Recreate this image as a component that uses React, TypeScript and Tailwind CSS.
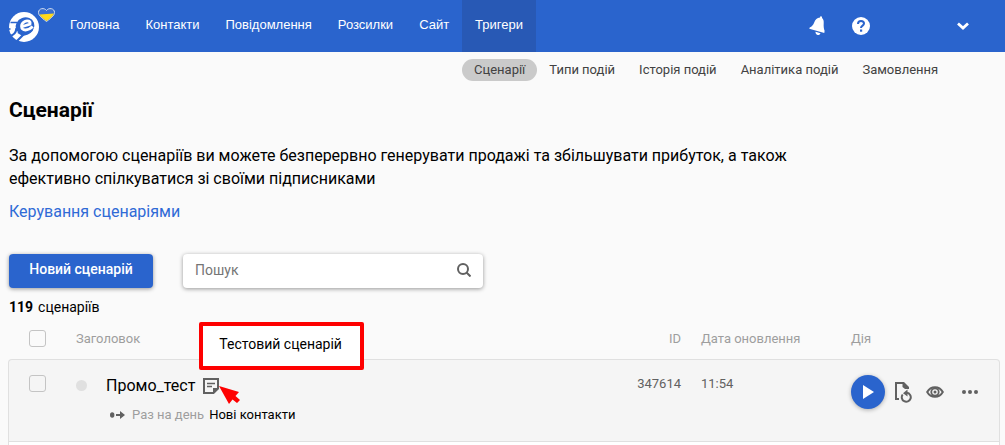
import React, { useState } from 'react';

const menuItems = ['Головна', 'Контакти', 'Повідомлення', 'Розсилки', 'Сайт', 'Тригери'];
const subMenuItems = ['Сценарії', 'Типи подій', 'Історія подій', 'Аналітика подій', 'Замовлення'];

const Logo: React.FC = () => (
    <svg width="48" height="38" viewBox="0 0 48 38" aria-hidden="true">
        <circle cx="16" cy="23" r="15" fill="#fff" />
        <ellipse cx="17" cy="22" rx="9.500" ry="8.500" transform="rotate(-20 17 22)" fill="#2a64cd" />
        <path d="M14.500 22.500 22 20.200c.8-3.200-2.600-4-5.200-2.800-4.600 2.200-4.300 8.600.7 8.600 2.800 0 5-1.300 7.200-3.400" fill="none" stroke="#fff" strokeWidth="2.800" />
        <g fill="none" stroke="#2a64cd">
            <path d="M2.500 18.500H9M0 25h2.500" strokeWidth="1.600" />
            <path d="M8.500 24c-.5 5-3.500 7.500-7 8M10 28l5 3-7 7" strokeWidth="2.200" />
            <path d="M13.500 31c4 0 8-1.500 11-5" strokeWidth="1.500" />
        </g>
        <path d="M38.500 17.500c-6-4.500-8-6.500-8-9 0-4.500 6-5 8-2 2-3 8-2.500 8 2 0 2.500-2 4.500-8 9z" fill="#3a6fd0" stroke="#d5dff0" />
        <path d="M31.500 10.500 46 9.500c-1.500 3-3.500 5-7.500 7.500-3.500-2.500-5.500-4-7-6.500z" fill="#ffd91a" />
    </svg>
);

const BellIcon: React.FC = () => (
    <svg width="16" height="20" viewBox="0 0 16 20" fill="#fff" aria-hidden="true">
        <path d="M12 .3c.9.1 1.200.8 1 1.700 1.500 1.200 1.900 3 1.700 5.200-.2 3 .1 5.500.9 7.600l-.3 2.300L.3 12.700l.4-1.200c2.300-.9 3.500-2.700 4.500-5.100C6.300 3.700 8 2.100 11 1.600c.1-.8.4-1.300 1-1.300z" />
        <path d="m6.500 15.800 5 1.400c-.5 1.400-1.500 2-2.900 1.700-1.500-.4-2.200-1.500-2.100-3.100z" />
    </svg>
);

const HelpIcon: React.FC = () => (
    <svg width="18" height="18" viewBox="0 0 18 18" aria-hidden="true">
        <circle cx="9" cy="9" r="9" fill="#fff" />
        <path d="M6 7c0-2 1.200-3 3-3s3 1 3 2.600c0 2-3 2-3 4.400" fill="none" stroke="#2a64cd" strokeWidth="2" />
        <path d="M8 12.500h2.200v2.200H8z" fill="#2a64cd" />
    </svg>
);

const NoteIcon: React.FC = () => (
    <svg width="16" height="16" viewBox="0 0 16 16" aria-hidden="true">
        <path d="M1 1h14v9.500L10.500 15H1z" fill="none" stroke="#616161" strokeWidth="2" />
        <path d="M10 15v-5h5z" fill="#616161" />
        <path d="M4 5.500h8M4 8.500h5" stroke="#616161" strokeWidth="1.500" />
    </svg>
);

const RestoreIcon: React.FC = () => (
    <svg width="18" height="22" viewBox="0 0 18 22" aria-hidden="true">
        <path d="M5 18H2V2h7.500" fill="none" stroke="#616161" strokeWidth="2" />
        <path d="M8.500 1H10l5 5v2h-4L8.500 6z" fill="#616161" />
        <path d="M8.700 13.500a4.500 4.500 0 1 0 4.300-1.700" fill="none" stroke="#616161" strokeWidth="2" />
        <path d="m9 12.200 4.500-3.700v7z" fill="#616161" />
    </svg>
);

const EyeIcon: React.FC = () => (
    <svg width="18" height="12" viewBox="0 0 18 12" aria-hidden="true">
        <path d="M1.200 6C3 2.800 5.500 1.200 9 1.200S15 2.800 16.800 6C15 9.200 12.500 10.800 9 10.800S3 9.200 1.200 6z" fill="none" stroke="#616161" strokeWidth="2" />
        <circle cx="9" cy="6" r="4.600" fill="#616161" />
        <circle cx="9" cy="6" r="2.800" fill="#f5f5f5" />
        <circle cx="9" cy="6" r="1.500" fill="#616161" />
    </svg>
);

const Checkbox: React.FC<{ label: string }> = ({ label }) => (
    <input
        type="checkbox"
        aria-label={label}
        className="block h-[17px] w-[17px] appearance-none rounded-[3px] border border-[#c4c4c4] bg-transparent checked:bg-[#2a64cd]"
    />
);

const App: React.FC = () => {
    const [search, setSearch] = useState('');

    return (
        <div className="flex min-h-screen flex-col bg-[#fafafa] font-['Roboto',sans-serif] text-black">
            <header className="flex h-[52px] items-stretch bg-[#2a64cd] text-white">
                <a href="#" aria-label="eSputnik" className="w-[57px] pt-1 pl-2">
                    <Logo />
                </a>
                <nav className="flex flex-1 font-['Liberation_Sans',sans-serif]">
                    {menuItems.map((item) => (
                        <a
                            key={item}
                            href="#"
                            className={`flex items-center px-[13px] pb-0.5 text-[13px] ${item === 'Тригери' ? 'bg-[#2859b5]' : ''}`}
                        >
                            {item}
                        </a>
                    ))}
                </nav>
                <div className="flex items-center pr-9">
                    <button aria-label="Сповіщення" className="mr-[27px]">
                        <BellIcon />
                    </button>
                    <button aria-label="Допомога" className="mr-[87px]">
                        <HelpIcon />
                    </button>
                    <button aria-label="Профіль">
                        <svg width="12" height="8" viewBox="0 0 12 8" fill="none" stroke="#fff" strokeWidth="2.800" aria-hidden="true">
                            <path d="m1 1.500 5 4.500 5-4.500" />
                        </svg>
                    </button>
                </div>
            </header>

            <nav className="flex pt-[7px] pl-[462px]">
                {subMenuItems.map((item) => (
                    <a
                        key={item}
                        href="#"
                        className={`rounded-full px-3 text-[13px] leading-[22px] whitespace-nowrap text-[#424242] ${item === 'Сценарії' ? 'bg-[#cacaca]' : ''}`}
                    >
                        {item}
                    </a>
                ))}
            </nav>

            <main className="flex flex-1 flex-col pt-[15px] pr-[5px] pl-2">
                <div className="flex flex-col pl-px">
                    <h1 className="text-[21px] leading-7 font-bold">Сценарії</h1>
                    <p className="mt-5 max-w-[800px] text-base leading-[23px]">
                        За допомогою сценаріїв ви можете безперервно генерувати продажі та збільшувати прибуток, а також
                        ефективно спілкуватися зі своїми підписниками
                    </p>
                    <a href="#" className="mt-[10px] self-start text-base leading-6 text-[#2f6ad6]">
                        Керування сценаріями
                    </a>

                    <div className="mt-[30px] flex">
                        <button className="h-[34px] w-[144px] rounded-sm bg-[#2a64cd] pb-1 text-sm font-medium text-white shadow-[0_1px_4px_rgba(0,0,0,0.4)]">
                            Новий сценарій
                        </button>
                        <div className="ml-[30px] flex h-[34px] w-[300px] items-center rounded-sm bg-white px-3 pb-0.5 shadow-[0_1px_4px_rgba(0,0,0,0.4)]">
                            <input
                                type="text"
                                aria-label="Пошук"
                                placeholder="Пошук"
                                value={search}
                                onChange={(e) => setSearch(e.target.value)}
                                className="min-w-0 flex-1 text-sm outline-none placeholder:text-[#757575]"
                            />
                            <button aria-label="Шукати">
                                <svg width="14" height="14" viewBox="0 0 14 14" fill="none" stroke="#616161" strokeWidth="2" aria-hidden="true">
                                    <circle cx="6" cy="6" r="5" />
                                    <path d="m9.500 9.500 4 4" />
                                </svg>
                            </button>
                        </div>
                    </div>

                    <p className="mt-[9px] flex gap-[5px] text-sm leading-5">
                        <b>119</b>
                        <span>сценаріїв</span>
                    </p>
                </div>

                <table className="w-full table-fixed border-separate border-spacing-0 text-left text-[13px]">
                    <colgroup>
                        <col className="w-[68px]" />
                        <col />
                        <col className="w-[100px]" />
                        <col className="w-[150px]" />
                        <col className="w-[149px]" />
                    </colgroup>
                    <thead>
                        <tr className="h-[42px] text-[#9e9e9e]">
                            <th className="pl-[21px]">
                                <Checkbox label="Вибрати всі" />
                            </th>
                            <th className="pt-0.5 font-normal">Заголовок</th>
                            <th className="pt-0.5 pr-5 text-right font-normal">ID</th>
                            <th className="pt-0.5 font-normal">Дата оновлення</th>
                            <th className="pt-0.5 font-normal">Дія</th>
                        </tr>
                    </thead>
                    <tbody>
                        <tr className="h-[83px] align-top text-[#616161] *:border-y *:border-[#e0e0e0] *:bg-[#f5f5f5] *:pt-[15px]">
                            <td className="rounded-tl-sm border-l pl-5">
                                <Checkbox label="Вибрати Промо_тест" />
                            </td>
                            <td>
                                <div className="flex">
                                    <span className="mt-[5px] h-[11px] w-[11px] rounded-full bg-[#e0e0e0]" />
                                    <div className="ml-[19px]">
                                        <div className="flex items-center gap-2">
                                            <a href="#" className="text-base leading-[22px] text-black">Промо_тест</a>
                                            <div className="relative">
                                                <button aria-label="Нотатка" className="block">
                                                    <NoteIcon />
                                                </button>
                                                <div role="tooltip" className="absolute bottom-6 -left-1 rounded-[2px] border-4 border-[#fe0000] bg-white pt-1.5 pr-[18px] pb-2.5 pl-4 text-sm leading-6 whitespace-nowrap text-black">
                                                    Тестовий сценарій
                                                </div>
                                                <svg className="absolute top-2 left-4" width="22" height="19" viewBox="0 0 22 19" fill="#fe0000" aria-hidden="true">
                                                    <path d="M0 0 20 6l-3.500 4 4.500 4-3 3-4.500-3.500L10 18z" />
                                                </svg>
                                            </div>
                                        </div>
                                        <div className="mt-2 flex items-center pl-1 leading-5">
                                            <svg width="15" height="8" viewBox="0 0 15 8" fill="#616161" aria-hidden="true">
                                                <ellipse cx="2.200" cy="4" rx="2.200" ry="2.700" />
                                                <path d="M6 3h4V0l5 4-5 4V5H6z" />
                                            </svg>
                                            <span className="ml-[7px] text-[#9e9e9e]">Раз на день</span>
                                            <a href="#" className="ml-[5px] text-black">Нові контакти</a>
                                        </div>
                                    </div>
                                </div>
                            </td>
                            <td className="pr-5 text-right leading-[18px]">347614</td>
                            <td className="leading-[18px]">11:54</td>
                            <td className="rounded-tr-sm border-r">
                                <div className="flex items-center">
                                    <button aria-label="Запустити" className="flex h-[34px] w-[34px] items-center justify-center rounded-full bg-[#2a64cd] shadow-[0_1px_4px_rgba(0,0,0,0.3)]">
                                        <svg width="11" height="14" viewBox="0 0 11 14" fill="#fff" aria-hidden="true">
                                            <path d="M0 0v14l11-7z" />
                                        </svg>
                                    </button>
                                    <button aria-label="Відновити" className="ml-[9px]">
                                        <RestoreIcon />
                                    </button>
                                    <button aria-label="Переглянути" className="ml-[14px]">
                                        <EyeIcon />
                                    </button>
                                    <button aria-label="Більше" className="ml-[18px]">
                                        <svg width="16" height="4" viewBox="0 0 16 4" fill="#616161" aria-hidden="true">
                                            <circle cx="2" cy="2" r="2" />
                                            <circle cx="8" cy="2" r="2" />
                                            <circle cx="14" cy="2" r="2" />
                                        </svg>
                                    </button>
                                </div>
                            </td>
                        </tr>
                    </tbody>
                </table>
                <div className="flex-1 border-x border-[#e0e0e0] bg-white" />
            </main>
        </div>
    );
};

export default App;
